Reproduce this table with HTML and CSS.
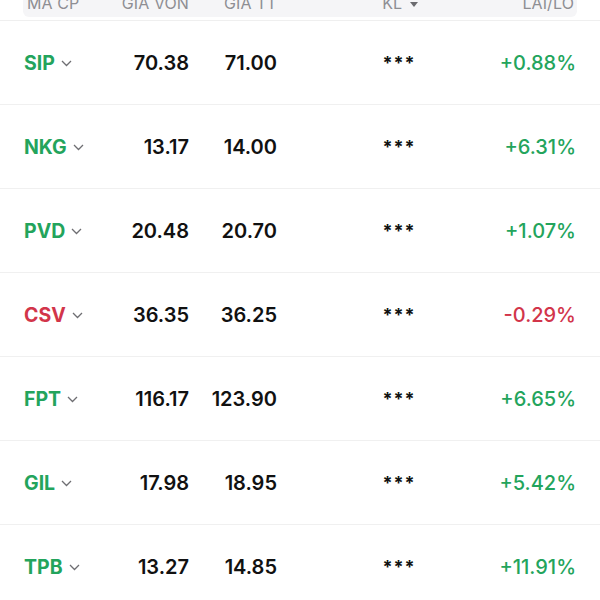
FILE: index.html
```html
<!DOCTYPE html>
<html lang="vi">
<head>
<meta charset="utf-8">
<title>Danh mục</title>
<link rel="stylesheet" href="styles.css">
</head>
<body>
<div class="table">
  <div class="thead">
    <div class="band">
      <div class="th">MÃ CP</div>
      <div class="th num">GIÁ VỐN</div>
      <div class="th num">GIÁ TT</div>
      <div class="th kl">KL <span class="caret"></span></div>
      <div class="th num">LÃI/LỖ</div>
    </div>
  </div>
  <div class="row">
    <div class="ticker up">SIP <svg class="chev" viewBox="0 0 11 7"><polyline points="1,1 5.5,5.5 10,1"/></svg></div>
    <div class="num val">70.38</div><div class="num val">71.00</div><div class="kl stars">***</div><div class="num pct up">+0.88%</div>
  </div>
  <div class="row">
    <div class="ticker up">NKG <svg class="chev" viewBox="0 0 11 7"><polyline points="1,1 5.5,5.5 10,1"/></svg></div>
    <div class="num val">13.17</div><div class="num val">14.00</div><div class="kl stars">***</div><div class="num pct up">+6.31%</div>
  </div>
  <div class="row">
    <div class="ticker up">PVD <svg class="chev" viewBox="0 0 11 7"><polyline points="1,1 5.5,5.5 10,1"/></svg></div>
    <div class="num val">20.48</div><div class="num val">20.70</div><div class="kl stars">***</div><div class="num pct up">+1.07%</div>
  </div>
  <div class="row">
    <div class="ticker down">CSV <svg class="chev" viewBox="0 0 11 7"><polyline points="1,1 5.5,5.5 10,1"/></svg></div>
    <div class="num val">36.35</div><div class="num val">36.25</div><div class="kl stars">***</div><div class="num pct down">-0.29%</div>
  </div>
  <div class="row">
    <div class="ticker up">FPT <svg class="chev" viewBox="0 0 11 7"><polyline points="1,1 5.5,5.5 10,1"/></svg></div>
    <div class="num val">116.17</div><div class="num val">123.90</div><div class="kl stars">***</div><div class="num pct up">+6.65%</div>
  </div>
  <div class="row">
    <div class="ticker up">GIL <svg class="chev" viewBox="0 0 11 7"><polyline points="1,1 5.5,5.5 10,1"/></svg></div>
    <div class="num val">17.98</div><div class="num val">18.95</div><div class="kl stars">***</div><div class="num pct up">+5.42%</div>
  </div>
  <div class="row">
    <div class="ticker up">TPB <svg class="chev" viewBox="0 0 11 7"><polyline points="1,1 5.5,5.5 10,1"/></svg></div>
    <div class="num val">13.27</div><div class="num val">14.85</div><div class="kl stars">***</div><div class="num pct up">+11.91%</div>
  </div>
</div>
</body>
</html>
```
FILE: styles.css
```css
html, body {
  margin: 0;
  padding: 0;
  background: #ffffff;
  font-family: "Inter", "Roboto", "Liberation Sans", sans-serif;
  overflow: hidden;
}
.table {
  width: 600px;
}
.thead {
  margin-top: -17px;
  padding: 0 23px 3px;
  border-bottom: 1px solid #efefef;
}
.band {
  height: 34px;
  background: #f5f5f7;
  border-radius: 0 0 6px 6px;
  display: grid;
  grid-template-columns: 73px 89px 88px 1fr 100px;
  align-items: center;
  padding: 5px 3px 0 4px;
  box-sizing: border-box;
}
.th {
  font-size: 16px;
  color: #8e8e93;
  letter-spacing: 0.1px;
}
.th.kl {
  padding-left: 49px;
  text-align: center;
}
.caret {
  display: inline-block;
  width: 0;
  height: 0;
  border-left: 4.5px solid transparent;
  border-right: 4.5px solid transparent;
  border-top: 5px solid #6b6b6f;
  vertical-align: middle;
  margin-left: 3px;
}
.row {
  height: 83px;
  border-bottom: 1px solid #f0f0f0;
  display: grid;
  grid-template-columns: 76px 89px 88px 1fr 100px;
  align-items: center;
  padding: 0 24px;
  font-size: 20px;
}
.num {
  text-align: right;
}
.ticker {
  font-weight: 700;
  font-size: 19.5px;
  display: flex;
  align-items: center;
  gap: 6px;
}
.chev {
  width: 11px;
  height: 7px;
  fill: none;
  stroke: #6e6e72;
  stroke-width: 1.3;
  margin-top: 1px;
}
.val {
  font-weight: 600;
  color: #111111;
}
.row .kl {
  padding-left: 45px;
  text-align: center;
}
.stars {
  font-weight: 700;
  color: #111111;
  font-size: 18px;
  letter-spacing: 1px;
}
.pct {
  font-weight: 500;
}
.up {
  color: #23a45c;
}
.down {
  color: #d2354a;
}
```
